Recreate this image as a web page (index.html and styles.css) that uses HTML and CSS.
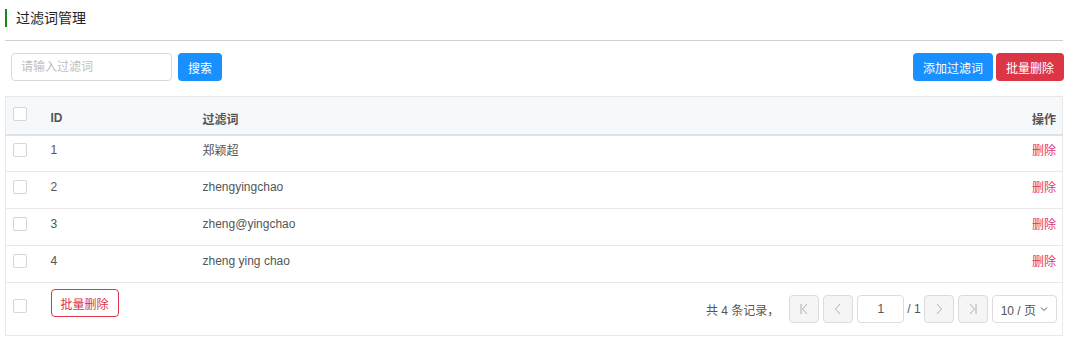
FILE: index.html
```html
<!DOCTYPE html>
<html lang="zh">
  <head>
    <meta charset="UTF-8">
    <title>过滤词管理</title>
    <link rel="stylesheet" href="styles.css">
  </head>
  <body>
    <div class="page">
      <!-- Title -->
      <div class="page-title">过滤词管理</div>

      <!-- Toolbar -->
      <div class="toolbar">
        <div class="search">
          <input type="text" placeholder="请输入过滤词">
          <button class="btn btn-primary">搜索</button>
        </div>
        <div class="actions">
          <button class="btn btn-primary">添加过滤词</button>
          <button class="btn btn-danger">批量删除</button>
        </div>
      </div>

      <!-- Table -->
      <table class="grid">
        <thead>
          <tr>
            <th class="col-check"><span class="checkbox"></span></th>
            <th class="col-id">ID</th>
            <th class="col-word">过滤词</th>
            <th class="col-op">操作</th>
          </tr>
        </thead>
        <tbody>
          <tr>
            <td class="col-check"><span class="checkbox"></span></td>
            <td class="col-id">1</td>
            <td class="col-word">郑颖超</td>
            <td class="col-op"><a href="#">删除</a></td>
          </tr>
          <tr>
            <td class="col-check"><span class="checkbox"></span></td>
            <td class="col-id">2</td>
            <td class="col-word">zhengyingchao</td>
            <td class="col-op"><a href="#">删除</a></td>
          </tr>
          <tr>
            <td class="col-check"><span class="checkbox"></span></td>
            <td class="col-id">3</td>
            <td class="col-word">zheng@yingchao</td>
            <td class="col-op"><a href="#">删除</a></td>
          </tr>
          <tr>
            <td class="col-check"><span class="checkbox"></span></td>
            <td class="col-id">4</td>
            <td class="col-word">zheng ying chao</td>
            <td class="col-op"><a href="#">删除</a></td>
          </tr>
        </tbody>
        <tfoot>
          <tr>
            <td class="col-check"><span class="checkbox"></span></td>
            <td colspan="3">
              <div class="footer">
                <button class="btn btn-outline-danger">批量删除</button>
                <div class="pager">
                  <span class="total">共 4 条记录，</span>
                  <span class="page-btn disabled">
                    <svg width="10" height="12" viewBox="0 0 10 12"><path d="M2 1v10M8 1L3.5 6L8 11" fill="none" stroke="currentColor" stroke-width="1"/></svg>
                  </span>
                  <span class="page-btn disabled">
                    <svg width="10" height="12" viewBox="0 0 10 12"><path d="M7 1L2.5 6L7 11" fill="none" stroke="currentColor" stroke-width="1"/></svg>
                  </span>
                  <input class="page-input" type="text" value="1">
                  <span class="page-count">/ 1</span>
                  <span class="page-btn disabled">
                    <svg width="10" height="12" viewBox="0 0 10 12"><path d="M3 1L7.5 6L3 11" fill="none" stroke="currentColor" stroke-width="1"/></svg>
                  </span>
                  <span class="page-btn disabled">
                    <svg width="10" height="12" viewBox="0 0 10 12"><path d="M8 1v10M2 1L6.5 6L2 11" fill="none" stroke="currentColor" stroke-width="1"/></svg>
                  </span>
                  <span class="page-size">10 / 页
                    <svg width="8" height="6" viewBox="0 0 8 6"><path d="M1 1.5L4 4.5L7 1.5" fill="none" stroke="currentColor" stroke-width="1"/></svg>
                  </span>
                </div>
              </div>
            </td>
          </tr>
        </tfoot>
      </table>
    </div>
  </body>
</html>
```

FILE: styles.css
```css
/* Reset */
* {
  margin: 0;
  padding: 0;
  box-sizing: border-box;
}

body {
  font-family: "Liberation Sans", "Noto Sans CJK SC", sans-serif;
  font-size: 12px;
  color: #555;
  background: #ffffff;
}

.page {
  padding: 9px 3px 0 5px;
}

/* Title */
.page-title {
  border-left: 2px solid #148814;
  padding-left: 9px;
  font-size: 14px;
  line-height: 18px;
  color: #222;
  margin-bottom: 13px;
}

.toolbar {
  border-top: 1px solid #cfcfcf;
  display: flex;
  justify-content: space-between;
  align-items: center;
  padding: 12px 0 15px 6px;
}

.search {
  display: flex;
  gap: 6px;
}

.search input {
  width: 161px;
  height: 28px;
  border: 1px solid #d9d9d9;
  border-radius: 4px;
  padding: 0 9px;
  font-size: 12px;
  font-family: inherit;
  color: #333;
  outline: none;
}

.search input::placeholder {
  color: #c0c0c0;
}

.actions {
  display: flex;
  gap: 3px;
  margin-right: -1px;
}

/* Buttons */
.btn {
  height: 28px;
  padding: 0 9px;
  border: 1px solid transparent;
  border-radius: 4px;
  font-family: inherit;
  font-size: 12px;
  color: #fff;
  cursor: pointer;
}

.btn-primary {
  background-color: #1890ff;
}

.btn-danger {
  background-color: #dc3545;
}

.btn-outline-danger {
  background: #fff;
  color: #dc3545;
  border-color: #dc3545;
}

/* Table */
.grid {
  width: 1058px;
  border-collapse: collapse;
  border: 1px solid #e8e8e8;
}

.grid th {
  background-color: #f5f9fc;
  height: 38px;
  font-weight: 700;
  color: #555;
  text-align: left;
  border-bottom: 2px solid #dfe3e8;
  padding-top: 6px;
}

.grid td {
  height: 37px;
  border-bottom: 1px solid #e8e8e8;
}

.col-check {
  width: 45px;
  padding-left: 7px;
}

.grid th.col-check {
  vertical-align: top;
  padding-top: 10px;
}

.col-id {
  width: 152px;
}

.col-op {
  text-align: right !important;
  padding-right: 6px;
}

.col-op a {
  color: #e4336f;
  text-decoration: none;
}

.checkbox {
  display: block;
  width: 14px;
  height: 14px;
  border: 1px solid #d6d6d6;
  border-radius: 2px;
  background: #fff;
}

.grid tbody td {
  vertical-align: middle;
  padding-bottom: 7px;
}

.grid tfoot td {
  height: 53px;
  border-bottom: none;
  vertical-align: top;
  padding-top: 6px;
}

.grid tfoot td.col-check {
  padding-top: 16px;
}

.footer {
  display: flex;
  justify-content: space-between;
  align-items: flex-start;
  padding-right: 5px;
}

.pager {
  display: flex;
  align-items: center;
  gap: 4px;
  margin-top: 6px;
}

.total {
  margin-right: 6px;
}

.page-btn {
  display: flex;
  justify-content: center;
  align-items: center;
  width: 30px;
  height: 28px;
  border: 1px solid #dcdcdc;
  border-radius: 4px;
  background: #f5f5f5;
  color: #b0b0b0;
}

.page-input {
  width: 47px;
  height: 28px;
  border: 1px solid #dcdcdc;
  border-radius: 4px;
  text-align: center;
  font-family: inherit;
  font-size: 12px;
  color: #555;
}

.page-count {
  margin: 0 -1px;
}

.page-size {
  display: flex;
  align-items: center;
  gap: 4px;
  height: 28px;
  padding: 0 8px;
  border: 1px solid #dcdcdc;
  border-radius: 4px;
}
```
